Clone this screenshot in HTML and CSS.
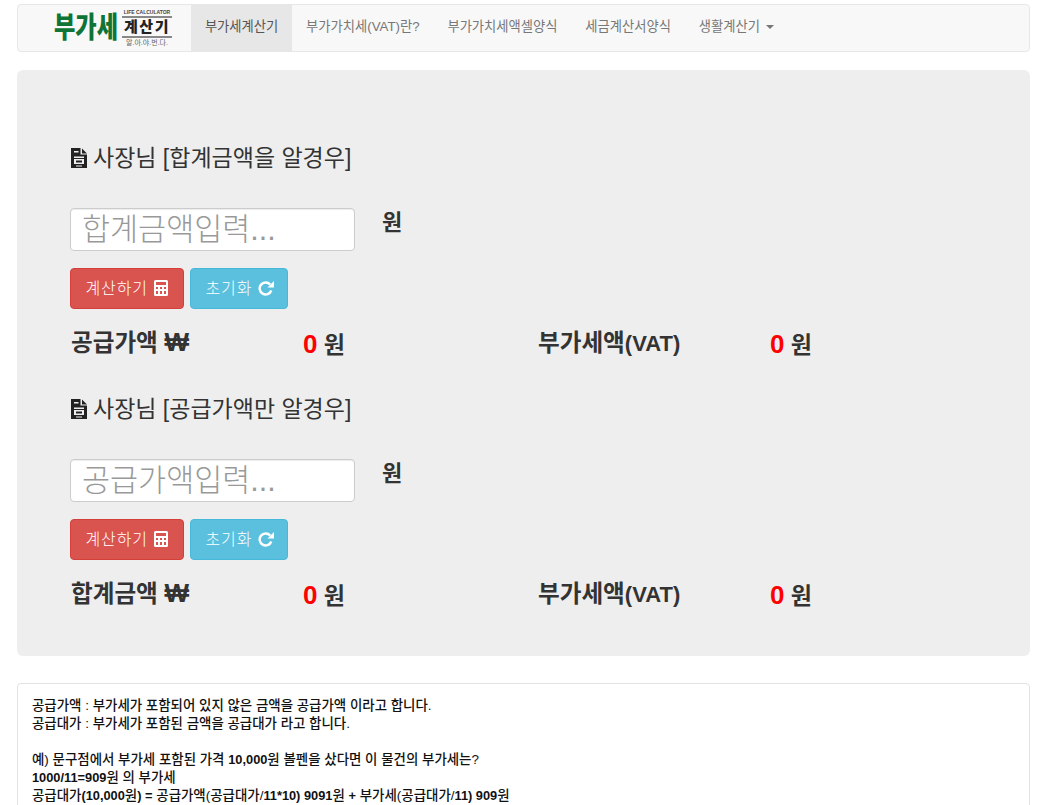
FILE: index.html
```html
<!DOCTYPE html>
<html lang="ko">
<head>
<meta charset="utf-8">
<title>부가세계산기</title>
<link rel="stylesheet" href="styles.css">
</head>
<body>
<svg class="defs" width="0" height="0" aria-hidden="true">
  <symbol id="i-doc" viewBox="0 0 16 20">
    <path fill="currentColor" fill-rule="evenodd" d="M0 0h9.500v6.500H16V20H0zM3 3v1.500h4.500V3zM3 8.500V10h10V8.500zM3 11v5h10v-5zM5 17.500v1h6v-1z"/>
    <path fill="currentColor" d="M11 .5 16 5.500h-5zM5 12.500h6v2H5z"/>
  </symbol>
  <symbol id="i-calc" viewBox="0 0 14 16">
    <path fill="currentColor" fill-rule="evenodd" d="M1.500 0h11A1.500 1.500 0 0 1 14 1.500v13a1.500 1.500 0 0 1-1.500 1.500h-11A1.500 1.500 0 0 1 0 14.500v-13A1.500 1.500 0 0 1 1.500 0zM2 2v3h10V2zM2 7v2h2V7zm4 0v2h2V7zm4 0v2h2V7zM2 11v3h2v-3zm4 0v3h2v-3zm4 0v3h2v-3z"/>
  </symbol>
  <symbol id="i-redo" viewBox="0 0 16 16">
    <path fill="none" stroke="currentColor" stroke-width="2.400" d="M13.300 10.500A6 6 0 1 1 12.200 4.500"/>
    <path fill="currentColor" d="M16 1v6.500H9.500z"/>
  </symbol>
</svg>

<div class="page">
  <nav class="navbar">
    <a class="brand" href="#">
      <span class="brand-main">부가세</span>
      <span class="brand-side">
        <span class="brand-top">LIFE CALCULATOR</span>
        <span class="brand-name">계산기</span>
        <span class="brand-sub">알.아.야.번.다.</span>
      </span>
    </a>
    <ul class="nav">
      <li class="nav-item active"><a href="#">부가세계산기</a></li>
      <li class="nav-item"><a href="#">부가가치세(VAT)란?</a></li>
      <li class="nav-item"><a href="#">부가가치세액셀양식</a></li>
      <li class="nav-item"><a href="#">세금계산서양식</a></li>
      <li class="nav-item"><a href="#">생활계산기 <span class="caret"></span></a></li>
    </ul>
  </nav>

  <main class="jumbotron">
    <section class="calc">
      <h3 class="calc-title"><svg class="icon-doc"><use href="#i-doc"/></svg> 사장님 [합계금액을 알경우]</h3>
      <div class="input-row">
        <input class="amount" type="text" placeholder="합계금액입력...">
        <span class="unit">원</span>
      </div>
      <div class="btn-row">
        <button class="btn btn-danger" type="button">계산하기 <svg class="icon-calc"><use href="#i-calc"/></svg></button>
        <button class="btn btn-info" type="button">초기화 <svg class="icon-redo"><use href="#i-redo"/></svg></button>
      </div>
      <div class="result">
        <span class="result-label">공급가액 <span class="won">₩</span></span>
        <span class="result-value"><b class="zero">0</b> 원</span>
        <span class="result-label">부가세액<span class="latin">(VAT)</span></span>
        <span class="result-value"><b class="zero">0</b> 원</span>
      </div>
    </section>
    <section class="calc">
      <h3 class="calc-title"><svg class="icon-doc"><use href="#i-doc"/></svg> 사장님 [공급가액만 알경우]</h3>
      <div class="input-row">
        <input class="amount" type="text" placeholder="공급가액입력...">
        <span class="unit">원</span>
      </div>
      <div class="btn-row">
        <button class="btn btn-danger" type="button">계산하기 <svg class="icon-calc"><use href="#i-calc"/></svg></button>
        <button class="btn btn-info" type="button">초기화 <svg class="icon-redo"><use href="#i-redo"/></svg></button>
      </div>
      <div class="result">
        <span class="result-label">합계금액 <span class="won">₩</span></span>
        <span class="result-value"><b class="zero">0</b> 원</span>
        <span class="result-label">부가세액<span class="latin">(VAT)</span></span>
        <span class="result-value"><b class="zero">0</b> 원</span>
      </div>
    </section>
  </main>

  <article class="info">
    <p>공급가액 : 부가세가 포함되어 있지 않은 금액을 공급가액 이라고 합니다.</p>
    <p>공급대가 : 부가세가 포함된 금액을 공급대가 라고 합니다.</p>
    <p class="blank">&nbsp;</p>
    <p>예) 문구점에서 부가세 포함된 가격 <b>10,000</b>원 볼펜을 샀다면 이 물건의 부가세는?</p>
    <p><b>1000/11=909</b>원 의 부가세</p>
    <p>공급대가<b>(10,000</b>원<b>) =</b> 공급가액(공급대가/<b>11*10) 9091</b>원 <b>+</b> 부가세(공급대가/<b>11) 909</b>원</p>
  </article>
</div>
</body>
</html>
```
FILE: styles.css
```css
* { box-sizing: border-box; }
html, body { margin: 0; padding: 0; background: #fff; }
body {
  font-family: "Liberation Sans", "Noto Sans CJK KR", sans-serif;
  color: #333;
  font-size: 14px;
}
.defs { position: absolute; }
a { color: inherit; text-decoration: none; }

.page { padding: 4px 12px 0 17px; }

.navbar {
  display: flex;
  height: 48px;
  margin-bottom: 18px;
  background: #f8f8f8;
  border: 1px solid #e7e7e7;
  border-radius: 4px;
}
.brand {
  display: flex;
  width: 173px;
  padding-left: 36px;
  align-items: center;
  gap: 4px;
}
.brand-main {
  flex: none;
  width: 64px;
  color: #0f7435;
  font-size: 29px;
  font-weight: 900;
  line-height: 1;
  white-space: nowrap;
  transform: scaleX(.8);
  transform-origin: left center;
}
.brand-side {
  display: flex;
  flex-direction: column;
  align-items: center;
  width: 50px;
}
.brand-top {
  height: 7px;
  font-size: 5px;
  line-height: 7px;
  font-weight: 700;
  color: #444;
  white-space: nowrap;
}
.brand-name {
  width: 100%;
  height: 22px;
  border-top: 2px solid #888;
  border-bottom: 2px solid #888;
  color: #222;
  font-size: 15px;
  font-weight: 900;
  line-height: 17px;
  text-align: center;
  letter-spacing: 1.500px;
}
.brand-sub {
  height: 10px;
  font-size: 7px;
  line-height: 10px;
  color: #666;
  white-space: nowrap;
}
.nav { display: flex; margin: 0; padding: 0; list-style: none; }
.nav-item a {
  display: block;
  height: 46px;
  padding: 0 13.900px;
  font-size: 13.300px;
  line-height: 44px;
  color: #777;
  white-space: nowrap;
}
.nav-item.active a { background: #e7e7e7; color: #555; }
.caret {
  display: inline-block;
  width: 0;
  height: 0;
  margin-left: 2px;
  vertical-align: middle;
  border-top: 4px solid #777;
  border-left: 4px solid transparent;
  border-right: 4px solid transparent;
}

.jumbotron {
  height: 586px;
  padding: 72px 54px 0 53px;
  background: #eee;
  border-radius: 6px;
  margin-bottom: 27px;
}
.calc { height: 251px; }
.calc-title {
  display: flex;
  align-items: center;
  gap: 6px;
  height: 32px;
  margin: 0 0 34px;
  font-size: 23px;
  font-weight: 400;
  line-height: 32px;
  color: #333;
}
.icon-doc { width: 16px; height: 20px; color: #222; flex: none; margin-left: 1px; }

.input-row { display: flex; height: 43px; margin-bottom: 17px; }
.amount {
  width: 285px;
  height: 43px;
  padding: 0 11px;
  background: #fff;
  border: 1px solid #ccc;
  border-radius: 4px;
  font-family: inherit;
  font-size: 30.500px;
  font-weight: 300;
  color: #555;
  box-shadow: inset 0 1px 1px rgba(0,0,0,.075);
}
.amount::placeholder { color: #999; opacity: 1; }
.unit {
  margin: -2px 0 0 27px;
  font-size: 22px;
  font-weight: 700;
  line-height: 34px;
}

.btn-row { display: flex; gap: 6px; margin-bottom: 17px; }
.btn {
  display: flex;
  align-items: center;
  gap: 6px;
  height: 41px;
  padding: 0 0 3px 14.500px;
  border: 1px solid transparent;
  border-radius: 4px;
  color: #fff;
  font-family: inherit;
  font-size: 16px;
  font-weight: 300;
  letter-spacing: .9px;
  white-space: nowrap;
}
.btn-danger { background: #d9534f; border-color: #d43f3a; width: 114px; }
.btn-info { background: #5bc0de; border-color: #46b8da; width: 98px; }
.icon-calc { width: 14px; height: 16px; margin-top: 1px; }
.icon-redo { width: 16px; height: 16px; margin-top: 1px; }

.result {
  display: grid;
  grid-template-columns: 232px 235px 232px 1fr;
  padding-left: 1px;
  align-items: center;
  height: 34px;
  margin-top: -3px;
}
.result-label { font-size: 23.600px; font-weight: 700; white-space: nowrap; margin-top: -2px; }
.latin { font-size: 22px; }
.won { font-size: 26px; line-height: 1; }
.result-value { font-size: 23px; font-weight: 700; padding-top: 3px; white-space: nowrap; }
.zero { color: #f00; font-size: 26px; }

.info {
  min-height: 180px;
  padding: 13px 14px;
  background: #fff;
  border: 1px solid #e3e3e3;
  border-radius: 4px;
  font-size: 13.450px;
  font-weight: 500;
  line-height: 18px;
  color: #111;
}
.info p { margin: 0; }
.info b { font-size: 12.800px; }
```
